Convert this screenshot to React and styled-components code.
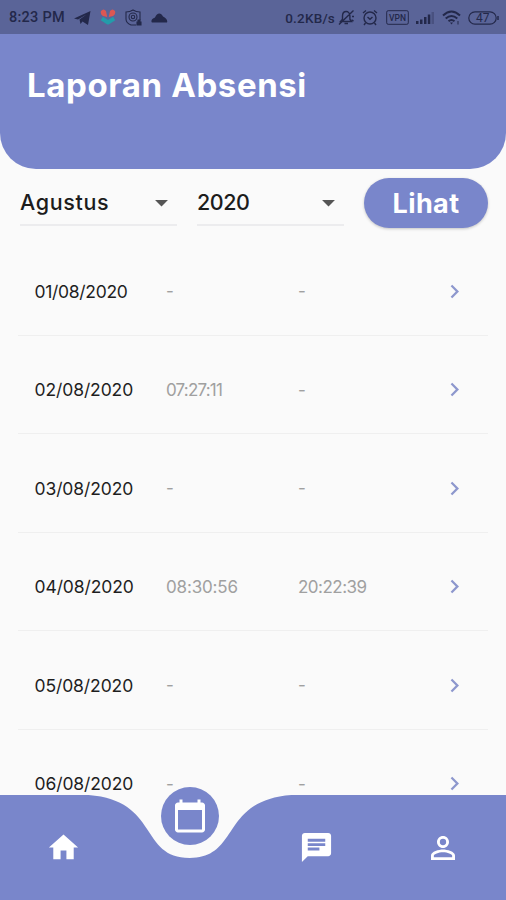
import styled, { createGlobalStyle } from "styled-components"
import {
  MdArrowDropDown,
  MdCalendarToday,
  MdChat,
  MdChevronRight,
  MdHome,
  MdPersonOutline,
} from "react-icons/md"

const GlobalStyle = createGlobalStyle`
  * {
    box-sizing: border-box;
  }
  body {
    margin: 0;
    background: #fafafa;
    font-family: Inter, "Open Sans", sans-serif;
  }
  svg {
    display: block;
    flex: none;
  }
`

const Screen = styled.div`
  display: flex;
  flex-direction: column;
  width: 506px;
  height: 900px;
  overflow: hidden;
  background: #fafafa;
`

const StatusBar = styled.div`
  display: flex;
  flex: none;
  justify-content: space-between;
  height: 34px;
  padding: 1px 7px 0 9px;
  background: #5a6498;
  color: #23284a;
  font-family: Roboto, sans-serif;
`

const StatusGroup = styled.div`
  display: flex;
  align-items: center;
  gap: ${(props) => props.$gap}px;
`

const StatusText = styled.span`
  font-size: ${(props) => props.$size}px;
  font-weight: 500;
  letter-spacing: ${(props) => props.$spacing}px;
  white-space: nowrap;
`

const Speed = styled(StatusText)`
  margin-right: -5px;
`

const Header = styled.header`
  flex: none;
  height: 135px;
  padding: 31px 27px;
  border-radius: 0 0 36px 36px;
  background: #7986cb;
`

const Title = styled.h1`
  margin: 0;
  color: #fff;
  font-size: 33px;
  font-weight: 750;
  line-height: 40px;
  letter-spacing: 0.6px;
  white-space: nowrap;
`

const Filter = styled.div`
  display: flex;
  flex: none;
  height: 73px;
  padding: 9px 18px 0 20px;
`

const Select = styled.div`
  display: flex;
  align-items: center;
  justify-content: space-between;
  width: ${(props) => props.$width}px;
  height: 48px;
  padding-top: 2px;
  margin-right: 20px;
  border-bottom: 2px solid #ececee;
  color: #1c1c1c;
  font-size: 21.5px;
  font-weight: 450;
  letter-spacing: ${(props) => props.$spacing}px;

  svg {
    color: #555;
  }
`

const Button = styled.button`
  width: 124px;
  height: 50px;
  padding: 0;
  border: 0;
  border-radius: 25px;
  background: #7986cb;
  box-shadow: 0 1px 3px rgba(0, 0, 0, 0.22);
  color: #fff;
  font-family: inherit;
  font-size: 27px;
  font-weight: 750;
  letter-spacing: 0.4px;
`

const List = styled.div`
  flex: 1;
  min-height: 0;
  overflow: hidden;
  padding: 0 18px;
  margin-top: -5px;
`

const Row = styled.div`
  display: grid;
  grid-template-columns: 131px 132px 142px 27px;
  align-items: center;
  height: 98.5px;
  padding: 11px 16px 0;
  border-bottom: 1px solid #efefef;
`

const DateText = styled.span`
  padding-left: 0.5px;
  color: #1e1e1e;
  font-size: 17.5px;
  font-weight: 370;
  letter-spacing: ${(props) => (props.$narrow ? -0.3 : -0.1)}px;
`

const Time = styled.span`
  padding-left: 1px;
  color: #a0a0a0;
  font-size: 17px;
  font-weight: 370;
  letter-spacing: ${(props) => props.$spacing}px;
`

const Chevron = styled(MdChevronRight)`
  margin-left: 2px;
  color: #8d97cd;
`

const NavBar = styled.nav`
  position: relative;
  flex: none;
  height: 105px;
  color: #fff;
`

const NavShape = styled.svg`
  position: absolute;
  left: 0;
  bottom: 0;
`

const NavItems = styled.div`
  position: relative;
  display: grid;
  grid-template-columns: repeat(4, 1fr);
  grid-template-rows: 105px;
  justify-items: center;
  align-items: center;
`

const Active = styled.div`
  display: flex;
  align-items: center;
  justify-content: center;
  align-self: start;
  width: 58px;
  height: 58px;
  margin-top: -8.5px;
  border-radius: 50%;
  background: #7986cb;
`

const rows = [
  { date: "01/08/2020", start: "-", end: "-" },
  { date: "02/08/2020", start: "07:27:11", end: "-" },
  { date: "03/08/2020", start: "-", end: "-" },
  { date: "04/08/2020", start: "08:30:56", end: "20:22:39" },
  { date: "05/08/2020", start: "-", end: "-" },
  { date: "06/08/2020", start: "-", end: "-" },
]

const Telegram = () => (
  <svg width="17" height="16" viewBox="0 0 17 16" fill="currentColor">
    <path d="M0 8.5 16.5 1 14 15 8.5 11.5 6.5 14 5.5 9.5 12.5 4.5 4 9.5Z" />
  </svg>
)

const Heart = () => (
  <svg width="16" height="17" viewBox="0 0 16 17">
    <path d="M1 2Q3.5-1 6 2L7.2 8 3 7Q0 5 1 2ZM15 2Q12.5-1 10 2L8.8 8 13 7Q16 5 15 2Z" fill="#dc5753" />
    <path d="M1.8 9.5 8 13.5 14.2 9.5" fill="none" stroke="#239caa" strokeWidth="4" strokeLinejoin="round" />
  </svg>
)

const Shield = () => (
  <svg width="17" height="18" viewBox="0 0 17 18" fill="none" stroke="currentColor" strokeWidth="1.1">
    <path d="M11 16H6Q1 14 1 10V3Q5 3 8 1q3 2 7 2v8" />
    <circle cx="8" cy="8" r="4" />
    <circle cx="8" cy="8" r="1.7" />
    <path d="M12 13h4v3h-4zM13 13v-2h2v2" fill="currentColor" />
  </svg>
)

const Cloud = () => (
  <svg width="17" height="10" viewBox="0 0 17 10" fill="currentColor">
    <path d="M1 9.5C-.5 8 1 5.5 4 4.500 6-.5 10-.5 12 3.500 15 5 17 7.500 16 9.500Z" />
  </svg>
)

const Muted = () => (
  <svg width="17" height="17" viewBox="0 0 17 17" fill="none" stroke="currentColor" strokeWidth="1.4">
    <path d="M2.5 12.5h11l-1.6-2.3V7C11.9 1 4.5 1 4.5 7v3.2ZM6.5 14.5h3.5M1 15.5 15.5 1.5" />
    <path d="M14 7.5h2M13.5 11l2 1" />
  </svg>
)

const Alarm = () => (
  <svg width="16" height="17" viewBox="0 0 16 17" fill="none" stroke="currentColor" strokeWidth="1.4">
    <circle cx="8" cy="9" r="6" />
    <path d="M1 4 4 1.5M15 4 12 1.5M5.5 8 8 10.3 10.5 8M3.5 14 2 16M12.5 14 14 16" />
  </svg>
)

const Vpn = () => (
  <svg width="23" height="15" viewBox="0 0 23 15">
    <rect x=".7" y=".7" width="21.6" height="13.6" rx="1.5" fill="none" stroke="currentColor" />
    <text x="11.5" y="10.8" textAnchor="middle" fontSize="8.5" fontWeight="500" fill="currentColor">
      VPN
    </text>
  </svg>
)

const Signal = () => (
  <svg width="18" height="13" viewBox="0 0 18 13" fill="currentColor">
    <path d="M0 10h2.5v3H0zM4 8.5h2.5V13H4zM8 6h2.5v7H8zM11.8 3.5h2.5V13h-2.5z" />
    <path d="M15.5 1H18v12h-2.5z" opacity=".3" />
  </svg>
)

const Wifi = () => (
  <svg width="19" height="15" viewBox="0 0 19 15" fill="none" stroke="currentColor" strokeWidth="2">
    <path d="M1 5.5Q9.5-2.5 18 5.5M3.7 8.5q5.8-5 11.6 0M6.5 11.3q3-2.5 6 0" />
    <path d="M8 12.5h3L9.5 14.5Z" fill="currentColor" stroke="none" />
    <path d="M16 11v3.5" strokeWidth="1" />
  </svg>
)

const Battery = () => (
  <svg width="31" height="14" viewBox="0 0 31 14">
    <rect x=".8" y=".8" width="27.4" height="12.4" rx="6.2" fill="none" stroke="currentColor" strokeWidth="1.2" />
    <path d="M30 5v4" stroke="currentColor" strokeWidth="1.5" />
    <text x="14.8" y="11" textAnchor="middle" fontSize="12" fill="currentColor">
      47
    </text>
  </svg>
)

const App = () => {
  return (
    <>
      <GlobalStyle />
      <Screen>
        <StatusBar>
          <StatusGroup $gap={9}>
            <StatusText $size={14.5} $spacing={0.25}>8:23 PM</StatusText>
            <Telegram />
            <Heart />
            <Shield />
            <Cloud />
          </StatusGroup>
          <StatusGroup $gap={7.5}>
            <Speed $size={13.5} $spacing={0.2}>0.2KB/s</Speed>
            <Muted />
            <Alarm />
            <Vpn />
            <Signal />
            <Wifi />
            <Battery />
          </StatusGroup>
        </StatusBar>
        <Header>
          <Title>Laporan Absensi</Title>
        </Header>
        <Filter>
          <Select $width={157} $spacing={0.65}>
            Agustus
            <MdArrowDropDown size={31} />
          </Select>
          <Select $width={147} $spacing={-0.5}>
            2020
            <MdArrowDropDown size={31} />
          </Select>
          <Button>Lihat</Button>
        </Filter>
        <List>
          {rows.map((row, index) => (
            <Row key={row.date}>
              <DateText $narrow={index == 0}>{row.date}</DateText>
              <Time $spacing={row.start.endsWith("11") ? -0.8 : -0.15}>{row.start}</Time>
              <Time $spacing={-0.5}>{row.end}</Time>
              <Chevron size={27} />
            </Row>
          ))}
        </List>
        <NavBar>
          <NavShape width="506" height="105" viewBox="0 0 506 105">
            <path
              d="M0 0H88.6C159.4 5.25 139.2 63 189.75 63S220.1 5.25 291.4 0H506V105H0Z"
              fill="#7986cb"
            />
          </NavShape>
          <NavItems>
            <MdHome size={35} />
            <Active>
              <MdCalendarToday size={36} />
            </Active>
            <MdChat size={35} />
            <MdPersonOutline size={36} />
          </NavItems>
        </NavBar>
      </Screen>
    </>
  )
}

export default App
